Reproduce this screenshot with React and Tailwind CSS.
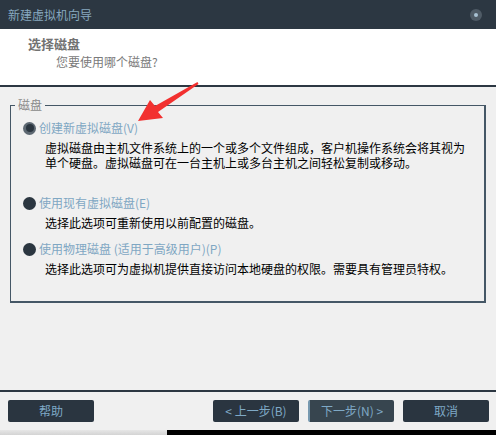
import React from 'react';

const font = { fontFamily: '"Noto Sans CJK SC", "Noto Sans", sans-serif' };

function Radio({ selected }) {
  return (
    <span className={`w-[13px] h-[13px] rounded-full flex items-center justify-center shrink-0 ${selected ? 'bg-[#5d6872]' : 'bg-[#2b3640]'}`}>
      {selected && <span className="w-[8px] h-[8px] rounded-full bg-[#2b3640]" />}
    </span>
  );
}

function Option({ label, desc, selected }) {
  return (
    <div className="flex flex-col">
      <div className="flex items-center gap-[3px] h-[16px]">
        <Radio selected={selected} />
        <span className="text-[12px] leading-[16px] text-[#7fa7c3]">{label}</span>
      </div>
      <div className="pl-[22px] mt-[4px] text-[12px] text-black">
        {desc.map((line) => (
          <div key={line} className="h-[15px] leading-[15px]">{line}</div>
        ))}
      </div>
    </div>
  );
}

function Button({ children, primary }) {
  return (
    <button
      className={`w-[86px] h-[22px] rounded-[2px] text-[12px] text-[#7fa9c6] flex items-center justify-center ${
        primary ? 'bg-[#37454f] border-l-2 border-[#7799b0]' : 'bg-[#2a3540]'
      }`}
    >
      {children}
    </button>
  );
}

export default function App() {
  return (
    <div className="relative w-[496px] h-[435px] bg-[#f0f0f0] flex flex-col overflow-hidden" style={font}>
      {/* title bar */}
      <div className="h-[29px] bg-[#2c3742] flex items-center justify-between pl-[8px] pr-[14px]">
        <span className="text-[12px] text-[#87a8bf]">新建虚拟机向导</span>
        <span className="w-[12px] h-[12px] rounded-full bg-[#4f5b66] flex items-center justify-center">
          <span className="w-[4px] h-[4px] rounded-full bg-[#a9c2d4]" />
        </span>
      </div>

      {/* header */}
      <div className="h-[58px] bg-white border-b-2 border-[#2c3742] pt-[6px]">
        <div className="pl-[28px] text-[13px] leading-[18px] font-bold text-[#727272]">选择磁盘</div>
        <div className="pl-[56px] mt-[1px] text-[12px] leading-[16px] text-[#7a7a7a]">您要使用哪个磁盘?</div>
      </div>

      {/* body */}
      <div className="flex-1 px-[10px] pt-[18px]">
        <div className="relative h-[198px] border-l border-t border-r-2 border-b-2 border-[#455766] pl-[12px] pt-[14px] flex flex-col">
          <span className="absolute -top-[9px] left-[4px] px-[3px] bg-[#f0f0f0] text-[12px] leading-[16px] text-[#8a8a8a]">磁盘</span>
          <Option
            selected
            label="创建新虚拟磁盘(V)"
            desc={[
              '虚拟磁盘由主机文件系统上的一个或多个文件组成，客户机操作系统会将其视为',
              '单个硬盘。虚拟磁盘可在一台主机上或多台主机之间轻松复制或移动。',
            ]}
          />
          <div className="mt-[25px]">
            <Option label="使用现有虚拟磁盘(E)" desc={['选择此选项可重新使用以前配置的磁盘。']} />
          </div>
          <div className="mt-[11px]">
            <Option
              label="使用物理磁盘 (适用于高级用户)(P)"
              desc={['选择此选项可为虚拟机提供直接访问本地硬盘的权限。需要具有管理员特权。']}
            />
          </div>
        </div>
      </div>

      {/* footer */}
      <div className="h-[40px] border-t-2 border-[#2c3742] flex items-start pt-[8px] pl-[8px] pr-[7px]">
        <Button>帮助</Button>
        <div className="flex-1" />
        <div className="flex gap-[9px]">
          <Button>&lt; 上一步(B)</Button>
          <Button primary>下一步(N) &gt;</Button>
          <Button>取消</Button>
        </div>
      </div>
      <div className="h-[5px] flex">
        <div className="w-[167px] bg-gradient-to-b from-[#e6e6e6] to-[#d4d4d4]" />
        <div className="flex-1 bg-black" />
      </div>

      {/* red annotation arrow */}
      <svg className="absolute inset-0 pointer-events-none" width="496" height="435">
        <polygon
          points="138,121 150,100 155,106 197.5,82 198.5,84 158,112 163,118"
          fill="#f2302f"
        />
      </svg>
    </div>
  );
}
